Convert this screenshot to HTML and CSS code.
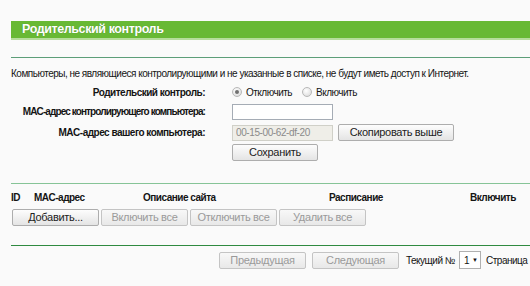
FILE: index.html
```html
<!DOCTYPE html>
<html>
<head>
<meta charset="utf-8">
<link rel="stylesheet" href="styles.css">
</head>
<body>
<div class="wrap">
  <div class="titlebar">Родительский контроль</div>
  <div class="rule-top"></div>
  <div class="notice">Компьютеры, не являющиеся контролирующими и не указанные в списке, не будут иметь доступ к Интернет.</div>
  <div class="form">
    <div class="row row-radio">
      <div class="label">Родительский контроль:</div>
      <div class="ctrl">
        <span class="radio checked"></span><span class="rlabel">Отключить</span>
        <span class="radio"></span><span class="rlabel">Включить</span>
      </div>
    </div>
    <div class="row row-input">
      <div class="label tight">MAC-адрес контролирующего компьютера:</div>
      <div class="ctrl"><input class="text" type="text"></div>
    </div>
    <div class="row row-input">
      <div class="label">MAC-адрес вашего компьютера:</div>
      <div class="ctrl"><input class="text" type="text" value="00-15-00-62-df-20" disabled><button class="btn btn-copy">Скопировать выше</button></div>
    </div>
    <div class="row row-save">
      <div class="label"></div>
      <div class="ctrl"><button class="btn btn-save">Сохранить</button></div>
    </div>
  </div>
  <div class="rule-mid"></div>
  <div class="thead">
    <span class="c-id">ID</span>
    <span class="c-mac">MAC-адрес</span>
    <span class="c-desc">Описание сайта</span>
    <span class="c-sched">Расписание</span>
    <span class="c-en">Включить</span>
  </div>
  <div class="actions">
    <button class="btn btn-act">Добавить...</button>
    <button class="btn btn-act dis">Включить все</button>
    <button class="btn btn-act dis">Отключить все</button>
    <button class="btn btn-act dis">Удалить все</button>
  </div>
  <div class="rule-bot"></div>
  <div class="pager">
    <button class="btn btn-page dis">Предыдущая</button>
    <button class="btn btn-page dis">Следующая</button>
    <span class="cur">Текущий №</span>
    <span class="select">1 <span class="arr">&#9660;</span></span>
    <span class="pg">Страница</span>
  </div>
</div>
</body>
</html>
```
FILE: styles.css
```css
html, body {
  margin: 0;
  background: #fafafa;
}
body {
  font-family: "Liberation Sans", Arial, sans-serif;
  font-size: 10px;
  letter-spacing: -0.5px;
  color: #141414;
}
.wrap {
  padding: 21px 0 0 11px;
}
.titlebar {
  height: 17px;
  background: #68b934;
  border-bottom: 2px solid #b6dd9c;
  color: #fff;
  font-weight: bold;
  font-size: 12.5px;
  letter-spacing: -0.4px;
  line-height: 17px;
  padding-left: 11px;
  text-shadow: 0 0 1px rgba(0,0,0,0.25);
}
.rule-top {
  margin-top: 17px;
  border-top: 1px solid #5c9e78;
}
.notice {
  margin-top: 10px;
  line-height: 12px;
  white-space: nowrap;
}
.form {
  margin-top: 5px;
}
.row {
  display: flex;
  align-items: center;
}
.label {
  width: 194px;
  text-align: right;
  font-weight: bold;
  flex: none;
  white-space: nowrap;
}
.label.tight {
  letter-spacing: -0.9px;
}
.row-radio { height: 14px; }
.row-input { height: 17px; margin-top: 4px; }
.row-save { height: 17px; margin-top: 3px; }
.row-radio .ctrl {
  margin-left: 27px;
  display: flex;
  align-items: center;
}
.row-input .ctrl, .row-save .ctrl {
  margin-left: 27px;
  display: flex;
  align-items: center;
}
.radio {
  width: 8px;
  height: 8px;
  border-radius: 50%;
  border: 1px solid #b8b8b8;
  background: radial-gradient(circle at 40% 35%, #fff, #d6d6d6);
  box-sizing: content-box;
  position: relative;
  margin-right: 4px;
}
.radio.checked::after {
  content: "";
  position: absolute;
  left: 2px;
  top: 2px;
  width: 4px;
  height: 4px;
  border-radius: 50%;
  background: #707070;
}
.rlabel {
  margin-right: 10px;
}
.text {
  width: 101px;
  height: 16px;
  box-sizing: border-box;
  border: 1px solid #a5acb5;
  background: #fff;
  margin: 0;
  padding: 0 3px;
  font-family: "Liberation Sans", Arial, sans-serif;
  font-size: 10px;
  letter-spacing: -0.4px;
}
.text:disabled {
  background: #efeee8;
  color: #8a8a8a;
  border-color: #d0d0c8;
}
.btn {
  font-family: "Liberation Sans", Arial, sans-serif;
  font-size: 11px;
  letter-spacing: -0.3px;
  color: #222;
  height: 17px;
  padding: 0;
  margin: 0;
  border: 1px solid #adadad;
  border-radius: 2px;
  background: linear-gradient(#fdfdfd, #e4e4e4);
  box-sizing: border-box;
  line-height: 15px;
}
.btn.dis {
  color: #9a9a9a;
  border-color: #c4c4c4;
  background: linear-gradient(#f8f8f8, #e8e8e8);
}
.btn-copy {
  width: 116px;
  margin-left: 5px;
}
.btn-save {
  width: 86px;
}
.rule-mid {
  margin-top: 22px;
  border-top: 1px solid #86c497;
}
.thead {
  display: flex;
  height: 12px;
  line-height: 12px;
  margin-top: 8px;
  font-weight: bold;
  white-space: nowrap;
}
.c-id { width: 23px; }
.c-mac { width: 109px; }
.c-desc { width: 186px; }
.c-sched { width: 141px; }
.actions {
  display: flex;
  gap: 2px;
  margin-top: 5px;
  padding-left: 1px;
}
.btn-act {
  width: 87px;
  height: 17px;
}
.rule-bot {
  margin-top: 19px;
  border-top: 1px solid #2f8a40;
}
.pager {
  display: flex;
  align-items: center;
  margin-top: 5px;
  padding-left: 208px;
  white-space: nowrap;
}
.btn-page {
  width: 87px;
  height: 17px;
  margin-right: 6px;
}
.cur {
  margin-left: 1px;
  margin-right: 4px;
}
.select {
  display: inline-flex;
  align-items: center;
  width: 22px;
  height: 18px;
  box-sizing: border-box;
  border: 1px solid #b0b0b0;
  background: #fff;
  padding-left: 4px;
  font-size: 10px;
}
.arr {
  font-size: 6px;
  margin-left: 3px;
}
.pg {
  margin-left: 5px;
}
```
